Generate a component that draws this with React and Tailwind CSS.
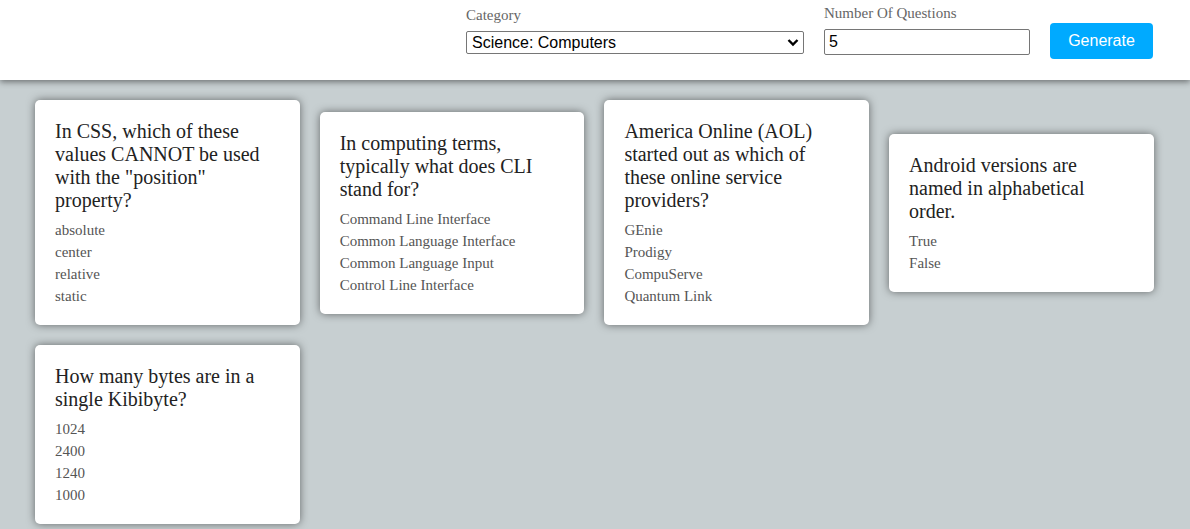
import { useState } from "react";

const preguntas = [
  {
    q: 'In CSS, which of these values CANNOT be used with the "position" property?',
    a: ["absolute", "center", "relative", "static"],
  },
  {
    q: "In computing terms, typically what does CLI stand for?",
    a: ["Command Line Interface", "Common Language Interface", "Common Language Input", "Control Line Interface"],
  },
  {
    q: "America Online (AOL) started out as which of these online service providers?",
    a: ["GEnie", "Prodigy", "CompuServe", "Quantum Link"],
  },
  {
    q: "Android versions are named in alphabetical order.",
    a: ["True", "False"],
  },
  {
    q: "How many bytes are in a single Kibibyte?",
    a: ["1024", "2400", "1240", "1000"],
  },
];

export default function App() {
  const [categoria, setCategoria] = useState("18");
  const [cantidad, setCantidad] = useState("5");

  return (
    <div className="min-h-screen bg-[#c7cfd1] font-['Liberation_Serif','Times_New_Roman',serif]">
      {/* Cabecera */}
      <header className="relative z-10 h-20 bg-white shadow-[0_2px_6px_rgba(0,0,0,0.45)] flex justify-end items-start gap-5 pr-[37px]">
        <div className="flex flex-col mt-[6px] w-[338px]">
          <label className="text-[15px] leading-[18px] text-[#666]">Category</label>
          <div className="relative mt-[7px]">
            <select
              value={categoria}
              onChange={(e) => setCategoria(e.target.value)}
              className="appearance-none w-full h-[23px] border border-[#767676] rounded-[2px] bg-white pl-[5px] text-base leading-[21px] text-black font-['Liberation_Sans',Arial,sans-serif] outline-none"
            >
              <option value="9">General Knowledge</option>
              <option value="18">Science: Computers</option>
              <option value="19">Science: Mathematics</option>
            </select>
            <svg
              className="pointer-events-none absolute right-[5px] top-[7px]"
              width="12"
              height="9"
              viewBox="0 0 12 9"
            >
              <polyline points="1.5,2 6,6.5 10.5,2" fill="none" stroke="#000" strokeWidth="2.4" />
            </svg>
          </div>
        </div>

        <div className="flex flex-col mt-[4px] w-[206px]">
          <label className="text-[15px] leading-[18px] text-[#666]">Number Of Questions</label>
          <input
            type="text"
            value={cantidad}
            onChange={(e) => setCantidad(e.target.value)}
            className="mt-[7px] h-[26px] border border-[#767676] rounded-[2px] bg-white px-[4px] text-base text-black font-['Liberation_Sans',Arial,sans-serif] outline-none"
          />
        </div>

        <button className="mt-[23px] w-[103px] h-[36px] rounded-[4px] bg-[#00aaff] text-white text-base font-['Liberation_Sans',Arial,sans-serif]">
          Generate
        </button>
      </header>

      {/* Preguntas */}
      <main className="flex flex-wrap items-center gap-5 pt-5 pl-[35px] pr-[16px]">
        {preguntas.map((p, i) => (
          <div
            key={i}
            className="w-[264.7px] bg-white rounded-[5px] shadow-[0_0_8px_rgba(0,0,0,0.5)] pt-5 pb-[18px] pl-5 pr-[30px]"
          >
            <h2 className="text-[20px] leading-[23px] text-[#222]">{p.q}</h2>
            <ul className="mt-[7px]">
              {p.a.map((r) => (
                <li key={r} className="text-[15px] leading-[22px] text-[#555]">
                  {r}
                </li>
              ))}
            </ul>
          </div>
        ))}
      </main>
    </div>
  );
}
